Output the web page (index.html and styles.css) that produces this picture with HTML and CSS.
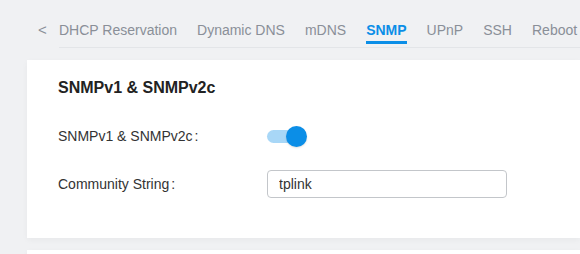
FILE: index.html
```html
<!DOCTYPE html>
<html lang="en">
<head>
    <meta charset="UTF-8">
    <meta name="viewport" content="width=device-width, initial-scale=1.0">
    <title>SNMP</title>
    <link rel="stylesheet" href="styles.css">
</head>
<body>
    <!-- Tab bar -->
    <div class="tab-bar">
        <span class="tab-prev">&lt;</span>
        <ul class="tab-list">
            <li class="tab">DHCP Reservation</li>
            <li class="tab">Dynamic DNS</li>
            <li class="tab">mDNS</li>
            <li class="tab active">SNMP</li>
            <li class="tab">UPnP</li>
            <li class="tab">SSH</li>
            <li class="tab">Reboot</li>
        </ul>
    </div>

    <!-- SNMPv1 & SNMPv2c card -->
    <div class="card">
        <div class="card-title">SNMPv1 &amp; SNMPv2c</div>
        <div class="form-row">
            <label class="form-label">SNMPv1 &amp; SNMPv2c<span class="colon">:</span></label>
            <div class="switch on">
                <span class="switch-track"></span>
                <span class="switch-knob"></span>
            </div>
        </div>
        <div class="form-row">
            <label class="form-label">Community String<span class="colon">:</span></label>
            <input class="text-input" type="text" value="tplink">
        </div>
    </div>

    <div class="card next"></div>
</body>
</html>
```

FILE: styles.css
```css
body {
    margin: 0;
    background-color: #f0f1f3;
    font-family: 'Liberation Sans', Arial, sans-serif;
    font-size: 14px;
    color: #333;
    overflow: hidden;
}
.tab-bar {
    display: flex;
    padding: 20px 0 0 38px;
}
.tab-prev {
    width: 21px;
    line-height: 20px;
    font-size: 15px;
    color: #8a8f98;
}
.tab-list {
    display: flex;
    flex: 1;
    margin: 0;
    padding: 0 0 3px 0;
    list-style: none;
    border-bottom: 1px solid #e3e5e8;
    white-space: nowrap;
    overflow: hidden;
}
.tab {
    line-height: 20px;
    padding-bottom: 1px;
    margin-right: 20px;
    color: #8a8f98;
    border-bottom: 3px solid transparent;
}
.tab:last-child {
    margin-right: 0;
}
.tab.active {
    color: #0b8ee7;
    font-weight: bold;
    border-bottom-color: #0b8ee7;
}
.card {
    margin: 12px 0 12px 27px;
    padding: 16px 0 40px 31px;
    background: #fff;
    box-shadow: 0 2px 6px rgba(0, 0, 0, 0.04);
}
.card.next {
    height: 40px;
    padding: 0;
}
.card-title {
    font-size: 16px;
    font-weight: bold;
    line-height: 24px;
    color: #222;
    margin-bottom: 22px;
}
.form-row {
    display: flex;
    align-items: center;
    height: 28px;
    margin-bottom: 20px;
}
.form-row:last-child {
    margin-bottom: 0;
}
.form-label {
    width: 209px;
    color: #333;
}
.colon {
    margin-left: 2px;
}
.switch {
    position: relative;
    width: 40px;
    height: 20px;
    margin-top: -1px;
}
.switch-track {
    position: absolute;
    left: 0;
    top: 4px;
    width: 36px;
    height: 13px;
    border-radius: 7px;
    background: #a8d7f7;
}
.switch-knob {
    position: absolute;
    right: 0;
    top: 0;
    width: 21px;
    height: 21px;
    border-radius: 50%;
    background: #0b8ee7;
    box-shadow: 0 1px 2px rgba(0, 0, 0, 0.12);
}
.text-input {
    box-sizing: border-box;
    width: 240px;
    height: 28px;
    padding: 0 11px;
    border: 1px solid #c3c6ca;
    border-radius: 4px;
    font-family: 'Liberation Sans', Arial, sans-serif;
    font-size: 14px;
    color: #333;
    outline: none;
}
```
